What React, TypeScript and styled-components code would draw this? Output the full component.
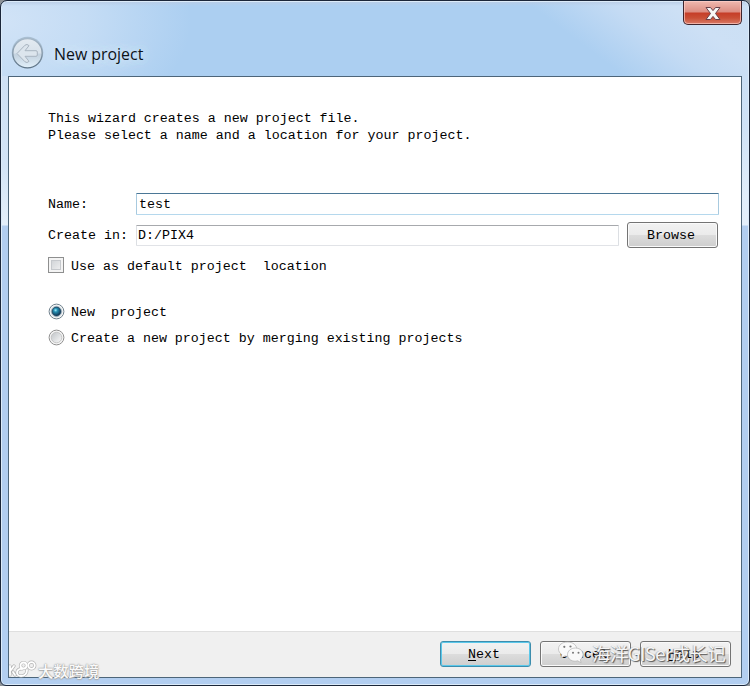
import React from "react";
import styled, { createGlobalStyle } from "styled-components";

const Global = createGlobalStyle`
  * { box-sizing: border-box; }
  html, body { margin: 0; padding: 0; background: #8d9297; overflow: hidden; }
`;

const Window = styled.div`
  width: 750px;
  height: 686px;
  border: 1px solid #1b2639;
  border-radius: 7px 7px 6px 6px;
  box-shadow: inset 0 0 0 1px #dcebf9;
  padding: 0 7px 7px;
  display: flex;
  flex-direction: column;
  position: relative;
  overflow: hidden;
  font: 13.32px/17px "Liberation Mono", monospace;
  color: #000;
  background:
    linear-gradient(180deg, #cbdff5 0, #cfe2f6 50px, #e0edfa 120px, #e4effa 149px, #b2cef0 150px, #b2cef0 100%) right 75px / 8px 100% no-repeat,
    linear-gradient(180deg, #cfe1f5 0, #d3e4f6 90px, #e4effa 149px, #b2cef0 150px, #b2cef0 100%) left 75px / 8px 100% no-repeat,
    linear-gradient(180deg, #b9cce5 0, rgba(185, 204, 229, 0) 5px) 0 0 / 100% 75px no-repeat,
    radial-gradient(ellipse 190px 120px at 0 20px, rgba(211, 228, 247, 0.95) 0, rgba(205, 225, 246, 0.75) 45%, rgba(174, 207, 240, 0) 100%) 0 0 / 100% 75px no-repeat,
    linear-gradient(37deg, #accff1 0, #accff1 375px, #c4dbf4 425px, #cde0f5 460px, #cbdff4 100%) 0 0 / 100% 75px no-repeat,
    #b2cef0;
`;

const Header = styled.header`
  height: 75px;
  flex: none;
  display: flex;
  align-items: flex-start;
  padding: 35px 0 0 3px;
`;

const BackIcon = styled.svg`
  width: 33px;
  height: 33px;
  flex: none;
`;

const Title = styled.h1`
  margin: 6px 0 0 10px;
  font: 400 15.9px/24px "Open Sans", "Noto Sans", sans-serif;
  color: #0c1218;
  text-shadow: 0 0 8px #d5e7fa, 0 0 12px #d5e7fa, 0 0 18px #d5e7fa;
`;

const CloseButton = styled.button`
  position: absolute;
  top: 0;
  right: 7px;
  width: 59px;
  height: 24px;
  padding: 0;
  border: 1px solid #3f252d;
  border-top: 0;
  border-radius: 0 0 5px 5px;
  box-shadow: inset 0 0 0 1px rgba(255, 210, 205, 0.65);
  background: linear-gradient(180deg, #efb9b0 0, #dc8d82 11px, #c63d28 12px, #c94f36 17px, #dc8270 24px);
  svg { display: block; margin: 1px auto 0; }
`;

const Client = styled.main`
  flex: 1;
  display: flex;
  flex-direction: column;
  border: 1px solid #4d6579;
  background: #fff;
  min-height: 0;
`;

const Body = styled.section`
  flex: 1;
  padding: 33px 22px 0 39px;
`;

const Intro = styled.p`
  margin: 0 0 49px;
  white-space: pre;
`;

const FieldRow = styled.div<{ $height: number; $bottom: number }>`
  height: ${p => p.$height}px;
  margin-bottom: ${p => p.$bottom}px;
  display: flex;
  align-items: center;
`;

const Label = styled.label`
  width: 88px;
  flex: none;
  white-space: pre;
`;

const Input = styled.input<{ $focused?: boolean }>`
  flex: 1;
  min-width: 0;
  height: ${p => (p.$focused ? 22 : 21)}px;
  padding: 0 0 0 ${p => (p.$focused ? 2 : 1)}px;
  border: 1px solid;
  border-color: ${p => (p.$focused ? "#4b7796 #a8cadf #b5d8ed #a8cadf" : "#a7a9ad #dcdfe3 #e1e3e7 #dcdfe3")};
  border-radius: 1px;
  outline: 0;
  background: #fff;
  color: #000;
  font: inherit;
`;

const Button = styled.button<{ $primary?: boolean }>`
  width: 91px;
  height: 26px;
  flex: none;
  padding: 0 3px 0 0;
  border: 1px solid ${p => (p.$primary ? "#3d8dad" : "#747474")};
  border-radius: 3px;
  box-shadow: ${p => (p.$primary ? "inset 0 0 0 1px #5bc8ea" : "inset 0 0 0 1px #fafafa")};
  background: linear-gradient(180deg, #f2f2f2 0, #ebebeb 48%, #dcdcdc 52%, #cecece 100%);
  color: #000;
  font: inherit;
  u { text-underline-offset: 2px; }
`;

const Browse = styled(Button)`
  margin: 0 1px 0 8px;
`;

const Choice = styled.div<{ $bottom: number; $gap: number }>`
  height: 18px;
  margin-bottom: ${p => p.$bottom}px;
  display: flex;
  align-items: center;
  gap: ${p => p.$gap}px;
  white-space: pre;
`;

const RadioText = styled.span`
  padding-top: 2px;
`;

const CheckBox = styled.span`
  width: 16px;
  height: 16px;
  flex: none;
  margin-top: -2px;
  border: 1px solid #8e8f8f;
  background: linear-gradient(135deg, #c9cdd1, #f6f6f6);
  box-shadow: inset 0 0 0 2px #f4f4f4, inset 0 0 0 3px #c6c9cd;
`;

const RadioSvg = styled.svg`
  width: 17px;
  height: 17px;
  flex: none;
`;

const Footer = styled.footer`
  height: 46px;
  flex: none;
  display: flex;
  justify-content: flex-end;
  gap: 9px;
  padding: 9px 10px 0 0;
  border-top: 1px solid #dfdfdf;
  background: #f0f0f0;
`;

const AccountMark = styled.div`
  position: absolute;
  left: 555px;
  top: 639px;
  display: flex;
  align-items: center;
  gap: 5px;
  font: 18.5px/27px "Noto Sans CJK SC", sans-serif;
  letter-spacing: -0.6px;
  white-space: nowrap;
  color: #f5f5f5;
  text-shadow: 1px 1px 1px #555, -1px 0 1px rgba(100, 100, 100, 0.35);
  svg { margin-top: -3px; }
`;

const SiteMark = styled.div`
  position: absolute;
  left: 8px;
  top: 658px;
  display: flex;
  align-items: center;
  gap: 1px;
  font: 500 15.3px/22px "Noto Sans CJK SC", sans-serif;
  white-space: nowrap;
  color: #fafafa;
  text-shadow: 0 0 2px #999, 0 0 1px #999, 0 1px 1px #bbb;
`;

function Radio({ checked }: { checked?: boolean }) {
  return (
    <RadioSvg viewBox="0 0 17 17">
      <defs>
        <linearGradient id="well" x1="0" y1="0" x2="1" y2="1">
          <stop offset="0" stopColor="#bfc3c7" />
          <stop offset="1" stopColor="#fafafa" />
        </linearGradient>
        <radialGradient id="dot" cx=".4" cy=".35" r=".6">
          <stop offset="0" stopColor="#a5edfa" />
          <stop offset=".35" stopColor="#2590b3" />
          <stop offset="1" stopColor="#123c5c" />
        </radialGradient>
      </defs>
      <circle cx="8.5" cy="8.5" r="7.4" fill="#f5f5f5" stroke={checked ? "#71838f" : "#919191"} />
      <circle cx="8.5" cy="8.5" r="5.3" fill="url(#well)" stroke={checked ? "#a6bac7" : "#bdbdbd"} strokeWidth=".8" />
      {checked && <circle cx="8.5" cy="8.5" r="4.4" fill="url(#dot)" stroke="#173e5b" strokeWidth=".8" />}
    </RadioSvg>
  );
}

function Back() {
  return (
    <BackIcon viewBox="0 0 33 33">
      <defs>
        <linearGradient id="disc" x1="0" y1="0" x2="0" y2="1">
          <stop offset="0" stopColor="#e4ebf1" />
          <stop offset=".48" stopColor="#d8e2eb" />
          <stop offset=".55" stopColor="#c3d2df" />
          <stop offset="1" stopColor="#e2f0fa" />
        </linearGradient>
        <linearGradient id="rim" x1="0" y1="0" x2="0" y2="1">
          <stop offset="0" stopColor="#a6b8c8" />
          <stop offset="1" stopColor="#5f7588" />
        </linearGradient>
      </defs>
      <circle cx="16.5" cy="16.5" r="15.8" fill="#a9bfd3" />
      <circle cx="16.5" cy="17.2" r="14.7" fill="url(#disc)" stroke="url(#rim)" strokeWidth="1.3" />
      <path d="M6 17.5 14 9.2q2-1.8 4 .5l-4 5h11q1.3 0 1.3 1.3v3q0 1.3-1.3 1.3H14l4 5q-2 2.3-4 .5z" fill="#dce5ed" stroke="#a9b5c1" strokeLinejoin="round" />
    </BackIcon>
  );
}

function ChatLogo() {
  return (
    <svg width="31" height="25" viewBox="0 0 30 25">
      <g fill="#fafafa" stroke="#b1b1b1" strokeWidth=".7">
        <path d="M11 2C5.7 2 2 5.1 2 9c0 2.3 1.2 4.1 3.2 5.4L4.4 18l3.8-2c5.8 1.4 12-1.5 12-7C20.2 5.1 16.3 2 11 2Z" />
        <path d="M19 8c-4.5 0-8 2.9-8 6.6 0 4.9 5.3 7.7 10.2 6.2l3.4 1.9-.8-3.2C29.5 15.5 26 8 19 8Z" />
      </g>
      <g fill="#777">
        <circle cx="7.8" cy="6.8" r="1.1" /><circle cx="14" cy="6.5" r="1.1" />
        <circle cx="16.5" cy="12.8" r="1" /><circle cx="22" cy="12.8" r="1" />
      </g>
    </svg>
  );
}

function SiteLogo() {
  return (
    <svg width="28" height="20" viewBox="0 0 28 20" fill="none">
      {["#b5b5b5", "#fff"].map((stroke, i) => (
        <g key={stroke} stroke={stroke} strokeWidth={i ? 1.8 : 3.2} strokeLinecap="round">
          <path d="M1 6v9M2 10l3-4M4 12l2 3M13 9c-6-1-7 7-1 7 4 0 6-3 6-6" />
          <circle cx="14.5" cy="5.5" r="3" /><circle cx="22.5" cy="5.5" r="3.3" />
        </g>
      ))}
    </svg>
  );
}

export default function App() {
  return (
    <>
      <Global />
      <Window>
        <Header>
          <Back />
          <Title>New project</Title>
        </Header>
        <CloseButton aria-label="Close">
          <svg width="18" height="15" viewBox="0 0 18 15">
            <path d="M2 1.5h4.5L9 4.6l2.5-3.1H16L11.5 7.5l4.5 6h-4.5L9 10.4l-2.5 3.1H2l4.5-6z" fill="#f7f7f7" stroke="#68414a" strokeLinejoin="round" />
          </svg>
        </CloseButton>
        <Client>
          <Body>
            <Intro>{"This wizard creates a new project file.\nPlease select a name and a location for your project."}</Intro>
            <FieldRow $height={22} $bottom={7}>
              <Label htmlFor="name">Name:</Label>
              <Input id="name" defaultValue="test" $focused />
            </FieldRow>
            <FieldRow $height={26} $bottom={9}>
              <Label htmlFor="folder">Create in:</Label>
              <Input id="folder" defaultValue="D:/PIX4" />
              <Browse>Browse</Browse>
            </FieldRow>
            <Choice $bottom={27} $gap={7}><CheckBox />{"Use as default project  location"}</Choice>
            <Choice $bottom={8} $gap={6}><Radio checked /><RadioText>{"New  project"}</RadioText></Choice>
            <Choice $bottom={0} $gap={6}><Radio /><RadioText>Create a new project by merging existing projects</RadioText></Choice>
          </Body>
          <Footer>
            <Button $primary><u>N</u>ext</Button>
            <Button>Cancel</Button>
            <Button><u>H</u>elp</Button>
          </Footer>
        </Client>
        <AccountMark><ChatLogo />海洋GISer成长记</AccountMark>
        <SiteMark><SiteLogo />大数跨境</SiteMark>
      </Window>
    </>
  );
}
